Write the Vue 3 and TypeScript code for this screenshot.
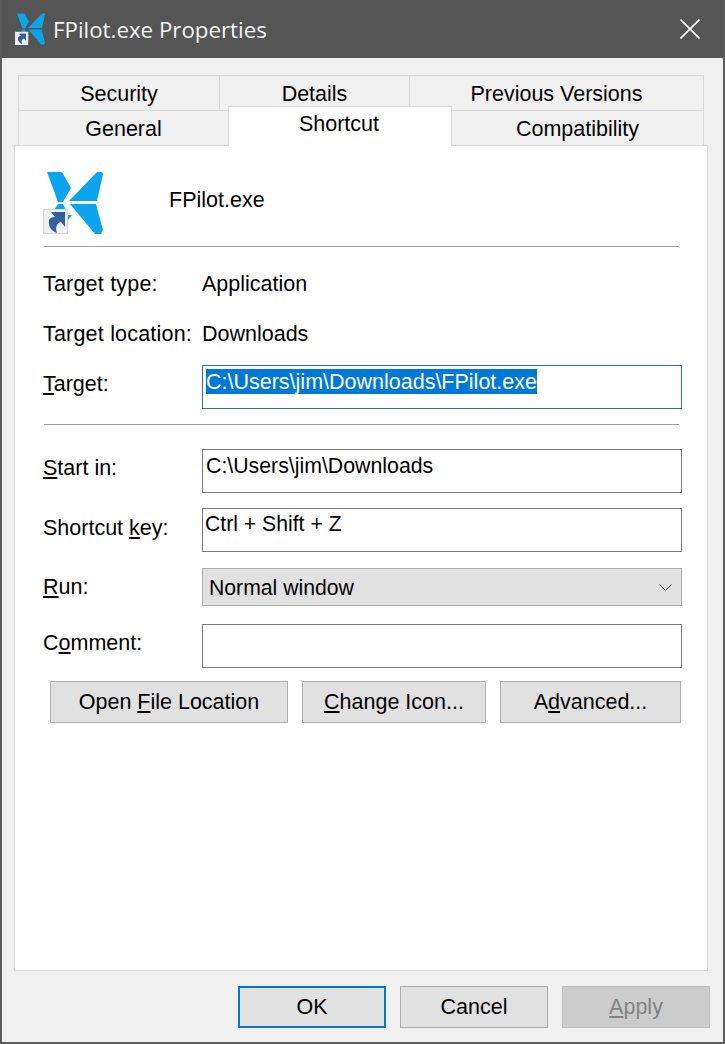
<script setup lang="ts">
interface TabItem {
  label: string;
  width: number;
}

const backTabs: TabItem[] = [
  { label: 'Security', width: 201 },
  { label: 'Details', width: 190 },
  { label: 'Previous Versions', width: 295 },
];
</script>

<template>
  <div class="window">
    <header class="titlebar">
      <svg class="logo logo--small" viewBox="0 0 60 64">
        <path class="wing" d="M4 1H19L28 17L20 31H15Z" />
        <path class="wing" d="M54 1H59L60 3L54 30H26Z" />
        <path class="wing" d="M27 33H53L60 59L58 63H52Z" />
        <path class="wing" d="M15 33H20L23 39H11Z" />
        <path class="wing" d="M25 44H29L25 49Z" />
        <rect class="badge" x="0" y="38" width="26" height="26" />
        <path class="arrow" d="M8 41H22V56L18 51C14 52 12 56 14 62C8 60 5 55 6 49C7 47 9 46 12 46Z" />
      </svg>
      <span class="title-text">FPilot.exe Properties</span>
      <svg class="close" viewBox="0 0 20 20">
        <path d="M0.5 0.5L19.5 19.5M19.5 0.5L0.5 19.5" />
      </svg>
    </header>

    <div class="body">
      <div class="tabs">
        <div class="tab-row">
          <div v-for="tab in backTabs" :key="tab.label" class="tab" :style="{ width: tab.width + 'px' }">
            {{ tab.label }}
          </div>
        </div>
        <div class="tab-row tab-row--front">
          <div class="tab tab--general">General</div>
          <div class="tab tab--active">Shortcut</div>
          <div class="tab tab--compat">Compatibility</div>
        </div>
      </div>

      <main class="panel">
        <div class="file-row">
          <svg class="logo logo--large" viewBox="0 0 60 64">
            <path class="wing" d="M4 1H19L28 17L20 31H15Z" />
            <path class="wing" d="M54 1H59L60 3L54 30H26Z" />
            <path class="wing" d="M27 33H53L60 59L58 63H52Z" />
            <path class="wing" d="M15 33H20L23 39H11Z" />
            <path class="wing" d="M25 44H29L25 49Z" />
            <rect class="badge" x="0.5" y="38.5" width="24" height="24" />
            <path class="arrow" d="M8 41H22V56L18 51C14 52 12 56 14 62C8 60 5 55 6 49C7 47 9 46 12 46Z" />
          </svg>
          <span class="file-name">FPilot.exe</span>
        </div>

        <div class="rule rule--first"></div>

        <div class="info info--type"><span class="label">Target type:</span><span>Application</span></div>
        <div class="info info--location"><span class="label">Target location:</span><span>Downloads</span></div>

        <div class="field field--target">
          <span class="label"><u>T</u>arget:</span>
          <div class="input input--focus"><span class="selected">C:\Users\jim\Downloads\FPilot.exe</span></div>
        </div>

        <div class="rule rule--second"></div>

        <div class="field field--start">
          <span class="label"><u>S</u>tart in:</span>
          <div class="input input--start">C:\Users\jim\Downloads</div>
        </div>
        <div class="field field--key">
          <span class="label label--key">Shortcut <u>k</u>ey:</span>
          <div class="input input--key">Ctrl + Shift + Z</div>
        </div>
        <div class="field field--run">
          <span class="label"><u>R</u>un:</span>
          <div class="select">
            <span>Normal window</span>
            <svg class="chevron" viewBox="0 0 13 8"><path d="M0.5 0.5L6.5 6.5L12.5 0.5" /></svg>
          </div>
        </div>
        <div class="field field--comment">
          <span class="label">C<u>o</u>mment:</span>
          <div class="input"></div>
        </div>

        <div class="actions">
          <button class="btn btn--open">Open <u>F</u>ile Location</button>
          <button class="btn btn--icon"><u>C</u>hange Icon...</button>
          <button class="btn btn--advanced">A<u>d</u>vanced...</button>
        </div>
      </main>

      <footer class="footer">
        <button class="btn btn--footer btn--default">OK</button>
        <button class="btn btn--footer">Cancel</button>
        <button class="btn btn--footer btn--disabled"><u>A</u>pply</button>
      </footer>
    </div>
  </div>
</template>

<style scoped>
.window {
  width: 725px;
  height: 1044px;
  box-sizing: border-box;
  border: 2px solid #5c5c5c;
  border-top: 0;
  display: flex;
  flex-direction: column;
  font-family: "Liberation Sans", Arial, sans-serif;
  font-size: 21.5px;
  color: #000;
  background: #f0f0f0;
}

.titlebar {
  height: 58px;
  flex: none;
  background: #555;
  display: flex;
  align-items: center;
  padding-left: 13px;
  color: #fff;
}

.title-text {
  font-family: "Open Sans", "Noto Sans", sans-serif;
  font-size: 22.3px;
  margin-left: 8px;
  color: #f4f4f4;
}

.close {
  width: 20px;
  height: 20px;
  margin-left: auto;
  margin-right: 23px;
  margin-top: -1px;
  fill: none;
  stroke: #fff;
  stroke-width: 1.6;
}

.logo {
  flex: none;
  display: block;
}
.logo--small {
  width: 30px;
  height: 32px;
}
.logo--large {
  width: 60px;
  height: 64px;
}
.wing {
  fill: #0aa5ec;
}
.badge {
  fill: #f0f0f0;
  stroke: #d4d4d4;
  stroke-width: 1;
}
.arrow {
  fill: #35609f;
}

.body {
  flex: 1;
  display: flex;
  flex-direction: column;
  padding: 17px 13px 0 12px;
}

.tabs {
  padding: 0 4px;
}
.tab-row {
  display: flex;
  height: 35px;
}
.tab {
  box-sizing: border-box;
  border: 1px solid #d9d9d9;
  border-right-width: 0;
  border-bottom-width: 0;
  display: flex;
  align-items: center;
  justify-content: center;
  background: #f0f0f0;
  padding-top: 2px;
}
.tab:last-child {
  border-right-width: 1px;
}
.tab--general {
  width: 210px;
}
.tab--active {
  width: 224px;
  height: 40px;
  margin-top: -4px;
  background: #fff;
  position: relative;
  z-index: 2;
  border-right-width: 1px;
  padding: 0 2px 4px 0;
}
.tab--compat {
  width: 252px;
  border-left-width: 0;
}

.panel {
  box-sizing: border-box;
  width: 694px;
  height: 826px;
  background: #fff;
  border: 1px solid #d9d9d9;
  padding: 0 25px 0 28px;
  flex: none;
  position: relative;
  z-index: 1;
}

.file-row {
  display: flex;
  align-items: center;
  height: 64px;
  margin-top: 25px;
}
.file-name {
  margin-left: 66px;
  margin-top: -6px;
}

.rule {
  height: 1px;
  background: #a0a0a0;
  margin: 0 3px 0 1px;
}
.rule--first {
  margin-top: 11px;
}
.rule--second {
  margin-top: 15px;
}

.info {
  display: flex;
  align-items: center;
  height: 26px;
}
.info--type,
.info--location {
  margin-top: 24px;
}

.label {
  width: 159px;
  flex: none;
}
.info .label {
  letter-spacing: 0.2px;
}

.field {
  display: flex;
  align-items: flex-start;
}
.field--target {
  margin-top: 18px;
}
.field--start {
  margin-top: 24px;
}
.field--key {
  margin-top: 15px;
}
.field--run {
  margin-top: 16px;
}
.field--comment {
  margin-top: 18px;
}
.field .label {
  padding-top: 7px;
}
.field .label--key {
  padding-top: 8px;
}

.input {
  box-sizing: border-box;
  width: 480px;
  height: 44px;
  border: 1px solid #7a7a7a;
  background: #fff;
  padding: 3px 3px 0;
  line-height: 24px;
}
.input--focus {
  border-color: #2a72b5;
}
.input--start {
  padding-top: 4px;
  font-size: 21.3px;
}
.input--key {
  padding-left: 2px;
  font-size: 21.2px;
}
.selected {
  background: #0078d7;
  color: #fff;
  display: inline-block;
  height: 25px;
  line-height: 26px;
}

.select {
  box-sizing: border-box;
  width: 480px;
  height: 38px;
  border: 1px solid #adadad;
  background: #e1e1e1;
  display: flex;
  align-items: center;
  justify-content: space-between;
  padding: 1px 9px 0 6px;
  font-size: 21.2px;
}
.chevron {
  width: 13px;
  height: 8px;
  fill: none;
  stroke: #404040;
  stroke-width: 1;
}

.actions {
  display: flex;
  gap: 14px;
  margin: 13px 0 0 7px;
}

.btn {
  box-sizing: border-box;
  height: 42px;
  border: 1px solid #adadad;
  background: #e1e1e1;
  font: inherit;
  color: #000;
  padding: 0;
}
.btn--open {
  width: 238px;
}
.btn--icon {
  width: 184px;
}
.btn--advanced {
  width: 181px;
}

.footer {
  display: flex;
  gap: 14px;
  justify-content: flex-end;
  margin-top: 15px;
}
.btn--footer {
  width: 148px;
}
.btn--default {
  border: 2px solid #0078d7;
}
.btn--disabled {
  background: #ccc;
  border-color: #bfbfbf;
  color: #838383;
}
</style>
